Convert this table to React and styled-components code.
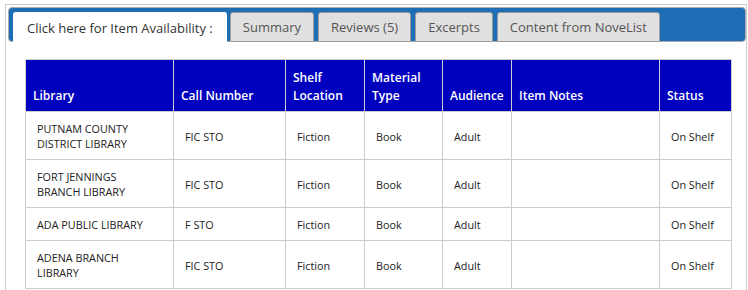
import React from 'react'
import styled, { createGlobalStyle } from 'styled-components'

const GlobalStyle = createGlobalStyle`
  body {
    margin: 0;
    background: #fff;
    font-family: "Open Sans", "Liberation Sans", sans-serif;
  }
`

const Panel = styled.div`
  margin: 4px 1px 0 5px;
  border: 1px solid #cccccc;
  border-bottom: none;
  padding: 2px 0 0 2px;
  height: 290px;
  box-sizing: border-box;
`

const TabBar = styled.ul`
  display: flex;
  gap: 3px;
  margin: 0;
  padding: 4px 4px 0;
  list-style: none;
  background: #1e6eb6;
  border: 1px solid #a8a8a8;
  border-radius: 4px;
  height: 35px;
  box-sizing: border-box;
`

const Tab = styled.li`
  display: flex;
  align-items: center;
  height: 30px;
  box-sizing: border-box;
  padding: 0 ${p => (p.active ? '13px' : '12px')};
  margin-right: ${p => (p.active ? '0' : '1px')};
  font-size: 13px;
  color: ${p => (p.active ? '#333' : '#555')};
  background: ${p => (p.active ? '#fff' : '#e0e0e0')};
  border: 1px solid ${p => (p.active ? '#fff' : '#9c9c9c')};
  border-bottom: ${p => (p.active ? 'none' : '1px solid #9c9c9c')};
  border-radius: 3px 3px 0 0;
  white-space: nowrap;
  cursor: pointer;
`

const Body = styled.div`
  padding: 17px 0 0 17px;
`

const Table = styled.table`
  border-collapse: collapse;
  table-layout: fixed;
  width: 706px;
  border: 1px solid #cccccc;
`

const HeadCell = styled.th`
  background: #0000bf;
  color: #fff;
  font-weight: 600;
  font-size: 12px;
  line-height: 18px;
  text-align: left;
  vertical-align: bottom;
  padding: 9px 7px 6px;
  border: 1px solid #cccccc;
`

const Cell = styled.td`
  font-size: 10.8px;
  line-height: 15px;
  color: #222;
  padding: 9px 11px 8px;
  border: 1px solid #cccccc;
  vertical-align: middle;
`

const columns = [
  { label: 'Library', width: 148 },
  { label: 'Call Number', width: 112 },
  { label: 'Shelf Location', width: 79 },
  { label: 'Material Type', width: 78 },
  { label: 'Audience', width: 69 },
  { label: 'Item Notes', width: 148 },
  { label: 'Status', width: 72 },
]

const rows = [
  ['PUTNAM COUNTY DISTRICT LIBRARY', 'FIC STO', 'Fiction', 'Book', 'Adult', '', 'On Shelf'],
  ['FORT JENNINGS BRANCH LIBRARY', 'FIC STO', 'Fiction', 'Book', 'Adult', '', 'On Shelf'],
  ['ADA PUBLIC LIBRARY', 'F STO', 'Fiction', 'Book', 'Adult', '', 'On Shelf'],
  ['ADENA BRANCH LIBRARY', 'FIC STO', 'Fiction', 'Book', 'Adult', '', 'On Shelf'],
]

const tabs = ['Click here for Item Availability :', 'Summary', 'Reviews (5)', 'Excerpts', 'Content from NoveList']

const App = () => {
  return (
    <>
      <GlobalStyle />
      <Panel>
        <TabBar>
          {tabs.map((t, i) => (
            <Tab key={t} active={i === 0}>{t}</Tab>
          ))}
        </TabBar>
        <Body>
          <Table>
            <colgroup>
              {columns.map(c => <col key={c.label} style={{ width: c.width }} />)}
            </colgroup>
            <thead>
              <tr>
                {columns.map(c => <HeadCell key={c.label}>{c.label}</HeadCell>)}
              </tr>
            </thead>
            <tbody>
              {rows.map((r, i) => (
                <tr key={i}>
                  {r.map((v, j) => <Cell key={j}>{v}</Cell>)}
                </tr>
              ))}
            </tbody>
          </Table>
        </Body>
      </Panel>
    </>
  )
}

export default App
